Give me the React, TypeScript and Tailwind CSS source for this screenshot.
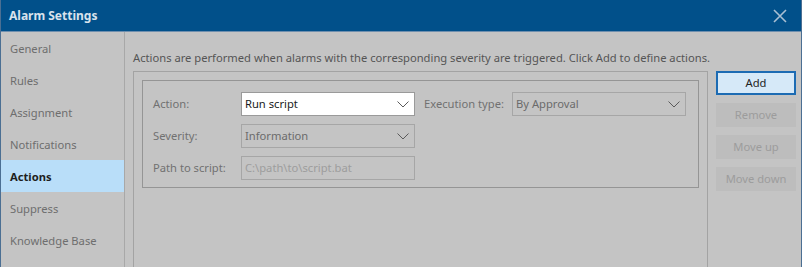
import React from 'react';

const navItems = ['General', 'Rules', 'Assignment', 'Notifications', 'Actions', 'Suppress', 'Knowledge Base'];

function Chevron() {
  return (
    <svg width="12" height="7" viewBox="0 0 12 7" className="shrink-0">
      <path d="M0.5 0.5 L6 6 L11.5 0.5" fill="none" stroke="#5a5a5a" strokeWidth="1" />
    </svg>
  );
}

function Select({ value, active }: { value: string; active?: boolean }) {
  return (
    <div
      className={
        'w-[174px] h-6 shrink-0 flex items-center justify-between pl-[3px] pr-[5px] border ' +
        (active ? 'bg-white border-[#9a9a9a] text-[#1a1a1a]' : 'border-[#a6a6a6] text-[#6b6b6b]')
      }
    >
      <span className="pt-[1px]">{value}</span>
      <Chevron />
    </div>
  );
}

function SideButton({ label, primary }: { label: string; primary?: boolean }) {
  return (
    <div
      className={
        'w-20 h-6 flex items-center justify-center pt-[1px] ' +
        (primary
          ? 'bg-[#d6e9f8] border-2 border-[#1c6bb3] text-[#222]'
          : 'bg-[#bdbdbd] text-[#9c9c9c]')
      }
    >
      {label}
    </div>
  );
}

export default function App() {
  return (
    <div className="w-[802px] h-[267px] overflow-hidden bg-[#c4c4c4] border-x border-[#4b6f93] flex flex-col font-['Noto_Sans',sans-serif] text-[11.2px]">
      {/* Title bar */}
      <div className="h-8 shrink-0 bg-[#01508a] flex items-center justify-between pl-2 pr-[14px] border-b border-[#6f8fae]">
        <span className="text-[12px] font-bold text-[#d9e2ec] pt-[1px]">Alarm Settings</span>
        <svg width="14" height="14" viewBox="0 0 14 14">
          <path d="M1 1 L13 13 M13 1 L1 13" stroke="#a9bfd3" strokeWidth="1.6" />
        </svg>
      </div>

      <div className="flex flex-1 min-h-0">
        {/* Sidebar */}
        <div className="w-[124px] shrink-0 border-r border-[#a8a8a8] flex flex-col">
          {navItems.map((item) => (
            <div
              key={item}
              className={
                'h-8 shrink-0 flex items-center pl-[9px] pt-[3px] ' +
                (item === 'Actions' ? 'bg-[#b9def9] text-[#1e1e1e] font-bold' : 'text-[#6e6e6e]')
              }
            >
              {item}
            </div>
          ))}
        </div>

        {/* Content */}
        <div className="flex-1 flex flex-col pl-2 pr-[5px] pt-[18px]">
          <div className="h-4 leading-4 text-[#555] whitespace-nowrap">
            Actions are performed when alarms with the corresponding severity are triggered. Click Add to define actions.
          </div>
          <div className="flex gap-2 mt-[5px] flex-1">
            <div className="flex-1 border-x border-t border-[#a3a3a3] pt-2 px-2">
              <div className="border border-[#959595] px-[10px] pt-[11px] pb-[7px] flex flex-col gap-2 text-[#717171] whitespace-nowrap">
                <div className="flex items-center h-6">
                  <span className="w-[88px] shrink-0 pt-[1px]">Action:</span>
                  <Select value="Run script" active />
                  <span className="w-[97px] shrink-0 pl-[9px] pt-[1px]">Execution type:</span>
                  <Select value="By Approval" />
                </div>
                <div className="flex items-center h-6">
                  <span className="w-[88px] shrink-0 pt-[1px]">Severity:</span>
                  <Select value="Information" />
                </div>
                <div className="flex items-center h-6">
                  <span className="w-[88px] shrink-0 pt-[1px]">Path to script:</span>
                  <div className="w-[174px] h-6 flex items-center pl-[3px] pt-[1px] border border-[#a6a6a6] text-[#9d9d9d]">
                    C:\path\to\script.bat
                  </div>
                </div>
              </div>
            </div>
            <div className="flex flex-col gap-2">
              <SideButton label="Add" primary />
              <SideButton label="Remove" />
              <SideButton label="Move up" />
              <SideButton label="Move down" />
            </div>
          </div>
        </div>
      </div>
    </div>
  );
}
